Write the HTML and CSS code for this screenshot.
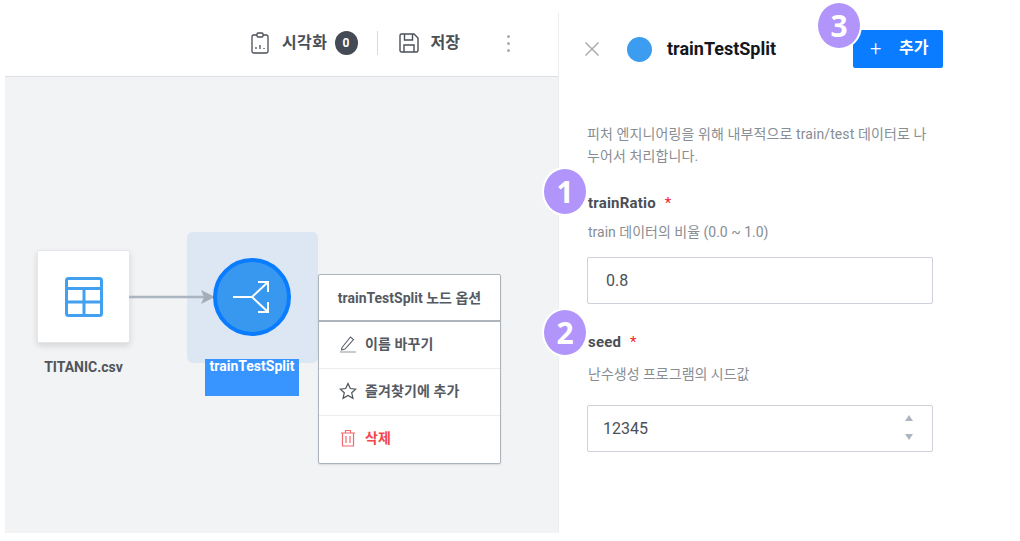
FILE: index.html
```html
<!DOCTYPE html>
<html lang="ko">
<head>
    <meta charset="UTF-8">
    <title>trainTestSplit</title>
    <link rel="stylesheet" href="styles.css">
</head>
<body>
    <div class="app">
        <div class="editor">
            <div class="toolbar">
                <svg class="tool-icon" width="20" height="22" viewBox="0 0 20 22" fill="none" stroke="#4a5058" stroke-width="1.300">
                    <path d="M7 3H3.500A1.500 1.500 0 0 0 2 4.500V19.500A1.500 1.500 0 0 0 3.500 21H16.500A1.500 1.500 0 0 0 18 19.500V4.500A1.500 1.500 0 0 0 16.500 3H13"/>
                    <rect x="7" y="1" width="6" height="4" rx="1"/>
                    <path d="M6 17v-2M10 17v-4M14 17v-1"/>
                </svg>
                <span class="tool-label tool-label-wide">시각화</span>
                <span class="count">0</span>
                <span class="tool-sep"></span>
                <svg class="tool-icon" width="20" height="20" viewBox="0 0 20 20" fill="none" stroke="#4a5058" stroke-width="1.400">
                    <path d="M2.500 1H15L19 5V17.500A1.500 1.500 0 0 1 17.500 19H2.500A1.500 1.500 0 0 1 1 17.500V2.500A1.500 1.500 0 0 1 2.500 1Z"/>
                    <path d="M5.500 1V7H13.500V1M5 19V12H15V19"/>
                </svg>
                <span class="tool-label">저장</span>
                <span class="more"><i></i><i></i><i></i></span>
            </div>
            <div class="canvas">
                <div class="file-node">
                    <svg width="38" height="40" viewBox="0 0 38 40" fill="none" stroke="#42a0f0" stroke-width="3">
                        <rect x="1.500" y="1.500" width="35" height="37" rx="2"/>
                        <path d="M1.500 11.500H36.500M1.500 25H36.500M19 11.500V38.500"/>
                    </svg>
                </div>
                <div class="file-name">TITANIC.csv</div>
                <div class="split-back"></div>
                <svg class="edge" width="90" height="18" viewBox="0 0 90 18">
                    <path d="M0 9H78" stroke="#abb5c0" stroke-width="2.500"/>
                    <path d="M72 2L86 9L72 16L75 9Z" fill="#a3aeba"/>
                </svg>
                <div class="split-node">
                    <svg width="40" height="40" viewBox="0 0 40 40" fill="none" stroke="#fff" stroke-width="2">
                        <path d="M1 20H20L36 5M20 20L36 35"/>
                        <path d="M26 5H36V15M26 35H36V25"/>
                    </svg>
                </div>
                <div class="split-name">trainTestSplit</div>
                <div class="node-menu">
                    <div class="menu-title">trainTestSplit 노드 옵션</div>
                    <div class="menu-item">
                        <svg width="18" height="18" viewBox="0 0 18 18" fill="none" stroke="#5c6269" stroke-width="1.100">
                            <path d="M3 12.500L11.500 2L14.500 4.500L6 14L2.500 15Z"/>
                            <path d="M1 17H17" stroke="#9aa0a6"/>
                        </svg>
                        <span>이름 바꾸기</span>
                    </div>
                    <div class="menu-item">
                        <svg width="18" height="18" viewBox="0 0 18 18" fill="none" stroke="#4a5058" stroke-width="1.200">
                            <path d="M9 1.500L11.300 6.500L16.800 7.100L12.700 10.800L13.900 16.200L9 13.400L4.100 16.200L5.300 10.800L1.200 7.100L6.700 6.500Z"/>
                        </svg>
                        <span>즐겨찾기에 추가</span>
                    </div>
                    <div class="menu-item danger">
                        <svg width="18" height="18" viewBox="0 0 18 18" fill="none" stroke="#f4686e" stroke-width="1.200">
                            <path d="M2 4H16M6.500 4V1.500H11.500V4M3.500 4V17H14.500V4M7 7V14M11 7V14"/>
                        </svg>
                        <span>삭제</span>
                    </div>
                </div>
            </div>
        </div>

        <div class="panel">
            <div class="panel-head">
                <svg class="close" width="16" height="16" viewBox="0 0 16 16" stroke="#a9acb0" stroke-width="1.500">
                    <path d="M1.500 1.500L14.500 14.500M14.500 1.500L1.500 14.500"/>
                </svg>
                <span class="panel-dot"></span>
                <span class="panel-title">trainTestSplit</span>
                <button class="add-btn"><span class="plus">+</span><span class="add-text">추가</span></button>
            </div>
            <p class="panel-desc">피처 엔지니어링을 위해 내부적으로 train/test 데이터로 나누어서 처리합니다.</p>
            <div class="field">
                <div class="field-label">trainRatio <em>*</em></div>
                <div class="field-hint">train 데이터의 비율 (0.0 ~ 1.0)</div>
                <input class="field-input ratio" type="text" value="0.8">
            </div>
            <div class="field field-seed">
                <div class="field-label">seed <em>*</em></div>
                <div class="field-hint">난수생성 프로그램의 시드값</div>
                <div class="number-wrap">
                    <input class="field-input" type="text" value="12345">
                    <span class="spin up"></span>
                    <span class="spin down"></span>
                </div>
            </div>
        </div>
    </div>

    <div class="step step-1">1</div>
    <div class="step step-2">2</div>
    <div class="step step-3">3</div>
</body>
</html>
```

FILE: styles.css
```css
* { box-sizing: border-box; }
body {
    margin: 0;
    height: 541px;
    overflow: hidden;
    background: #fff;
    color: #4a5058;
    font-family: Roboto, "Noto Sans CJK KR", sans-serif;
    font-size: 14px;
}
.app {
    display: flex;
    height: 533px;
    padding-left: 5px;
}
.editor {
    width: 554px;
    display: flex;
    flex-direction: column;
    border-right: 1px solid #eceef0;
    margin-top: 13px;
}
.toolbar {
    height: 64px;
    flex: none;
    display: flex;
    align-items: center;
    justify-content: flex-end;
    padding: 0 48px 3px 0;
    border-bottom: 1px solid #dcdfe5;
}
.tool-icon { margin-right: 12px; }
.tool-label { font-size: 16px; line-height: 20px; font-weight: 700; color: #4a5058; }
.tool-label-wide { letter-spacing: 0.5px; }
.count {
    width: 23px;
    height: 24px;
    margin-left: 7px;
    border-radius: 50%;
    background: #444b55;
    color: #fff;
    font-size: 12px;
    font-weight: 700;
    display: flex;
    align-items: center;
    justify-content: center;
}
.tool-sep {
    width: 1px;
    height: 24px;
    background: #d8dadd;
    margin: 0 21px 0 19px;
}
.more {
    display: flex;
    flex-direction: column;
    gap: 4px;
    margin-left: 47px;
}
.more i {
    width: 3px;
    height: 3px;
    border-radius: 50%;
    background: #a9adb3;
}

.canvas {
    flex: 1;
    position: relative;
    background: #f1f3f5;
}
.file-node {
    position: absolute;
    left: 32px;
    top: 173px;
    width: 93px;
    height: 93px;
    background: #fff;
    border: 1px solid #e4e6e9;
    border-radius: 2px;
    box-shadow: 0 3px 6px rgba(0,0,0,0.12);
    display: flex;
    align-items: center;
    justify-content: center;
}
.file-name {
    position: absolute;
    left: 32px;
    top: 281px;
    width: 93px;
    text-align: center;
    font-size: 14px;
    line-height: 18px;
    font-weight: 700;
    color: #50555b;
}
.edge { position: absolute; left: 124px; top: 211px; }
.split-back {
    position: absolute;
    left: 182px;
    top: 155px;
    width: 131px;
    height: 131px;
    background: #dce7f3;
    border-radius: 6px;
}
.split-node {
    position: absolute;
    left: 208px;
    top: 181px;
    width: 78px;
    height: 78px;
    background: #3898f0;
    border: 4px solid #0a7cff;
    border-radius: 50%;
    display: flex;
    align-items: center;
    justify-content: center;
}
.split-name {
    position: absolute;
    left: 200px;
    top: 282px;
    width: 94px;
    height: 37px;
    background: #3894ff;
    color: #fff;
    font-size: 14px;
    font-weight: 700;
    line-height: 15px;
    text-align: center;
}
.node-menu {
    position: absolute;
    left: 313px;
    top: 197px;
    width: 183px;
    height: 190px;
    background: #fff;
    border: 1px solid #aeb4bc;
    border-radius: 2px;
    box-shadow: 0 1px 2px rgba(0,0,0,0.1);
}
.menu-title {
    height: 47px;
    border-bottom: 2px solid #aeb4bc;
    display: flex;
    align-items: center;
    justify-content: center;
    font-size: 14px;
    line-height: 20px;
    font-weight: 700;
    color: #555a61;
}
.menu-item {
    height: 47px;
    display: flex;
    align-items: center;
    gap: 8px;
    padding: 0 0 3px 20px;
    border-bottom: 1px solid #ececee;
    font-size: 14px;
    line-height: 20px;
    font-weight: 700;
    letter-spacing: 0.1px;
    color: #555a61;
}
.menu-item:last-child { border-bottom: none; }
.menu-item.danger { color: #f2474d; }

.panel {
    flex: 1;
    padding-left: 28px;
    position: relative;
}
.panel-head {
    display: flex;
    align-items: center;
    height: 38px;
    margin-top: 30px;
    width: 356px;
}
.close { margin-left: -3px; }
.panel-dot {
    width: 25px;
    height: 25px;
    margin-left: 27px;
    border-radius: 50%;
    background: #3b9cf0;
}
.panel-title {
    margin-left: 15px;
    font-size: 18px;
    line-height: 24px;
    font-weight: 700;
    color: #14171c;
}
.add-btn {
    margin-left: auto;
    width: 90px;
    height: 38px;
    border: none;
    border-radius: 2px;
    background: #0a7cff;
    color: #fff;
    font-family: inherit;
    font-size: 16px;
    line-height: 20px;
    font-weight: 700;
    display: flex;
    align-items: center;
    padding: 0 0 3px 17px;
}
.plus {
    font-size: 20px;
    font-weight: 300;
    width: 29px;
    text-align: left;
}
.panel-desc {
    width: 346px;
    margin: 55px 0 0;
    font-size: 14px;
    letter-spacing: 0.1px;
    line-height: 22px;
    color: #888d93;
}
.field { width: 346px; margin-top: 26px; padding-left: 1px; }
.field-seed { margin-top: 28px; }
.field-label {
    font-size: 15px;
    letter-spacing: 0.2px;
    line-height: 20px;
    font-weight: 700;
    color: #4a4f56;
}
.field-label em {
    font-style: normal;
    font-weight: 400;
    color: #f5222d;
    margin-left: 5px;
}
.field-hint {
    margin-top: 9px;
    font-size: 14px;
    line-height: 20px;
    color: #888d93;
}
.field-input {
    display: block;
    width: 346px;
    height: 47px;
    margin: 15px 0 0 -1px;
    padding: 0 15px;
    border: 1px solid #cdd1d9;
    border-radius: 2px;
    background: #fff;
    color: #4a5058;
    font-family: inherit;
    font-size: 16px;
    outline: none;
}
.field-input.ratio { padding-left: 18px; }
.field-seed .field-hint { margin-top: 12px; }
.field-seed .field-input { margin-top: 0; }
.number-wrap { position: relative; margin-top: 21px; }
.spin {
    position: absolute;
    right: 20px;
    width: 0;
    height: 0;
    border-left: 4.500px solid transparent;
    border-right: 4.500px solid transparent;
}
.spin.up { top: 10px; border-bottom: 6px solid #adb5bf; }
.spin.down { top: 29px; border-top: 6px solid #adb5bf; }

.step {
    position: absolute;
    width: 46px;
    height: 49px;
    border: 2px solid #fff;
    border-radius: 50%;
    background: #b195fb;
    color: #fff;
    font-family: "Noto Sans", sans-serif;
    font-size: 30px;
    font-weight: 700;
    display: flex;
    align-items: center;
    justify-content: center;
}
.step-1 { left: 542px; top: 167px; }
.step-2 { left: 542px; top: 308px; }
.step-3 { left: 816px; top: 1px; }
```
